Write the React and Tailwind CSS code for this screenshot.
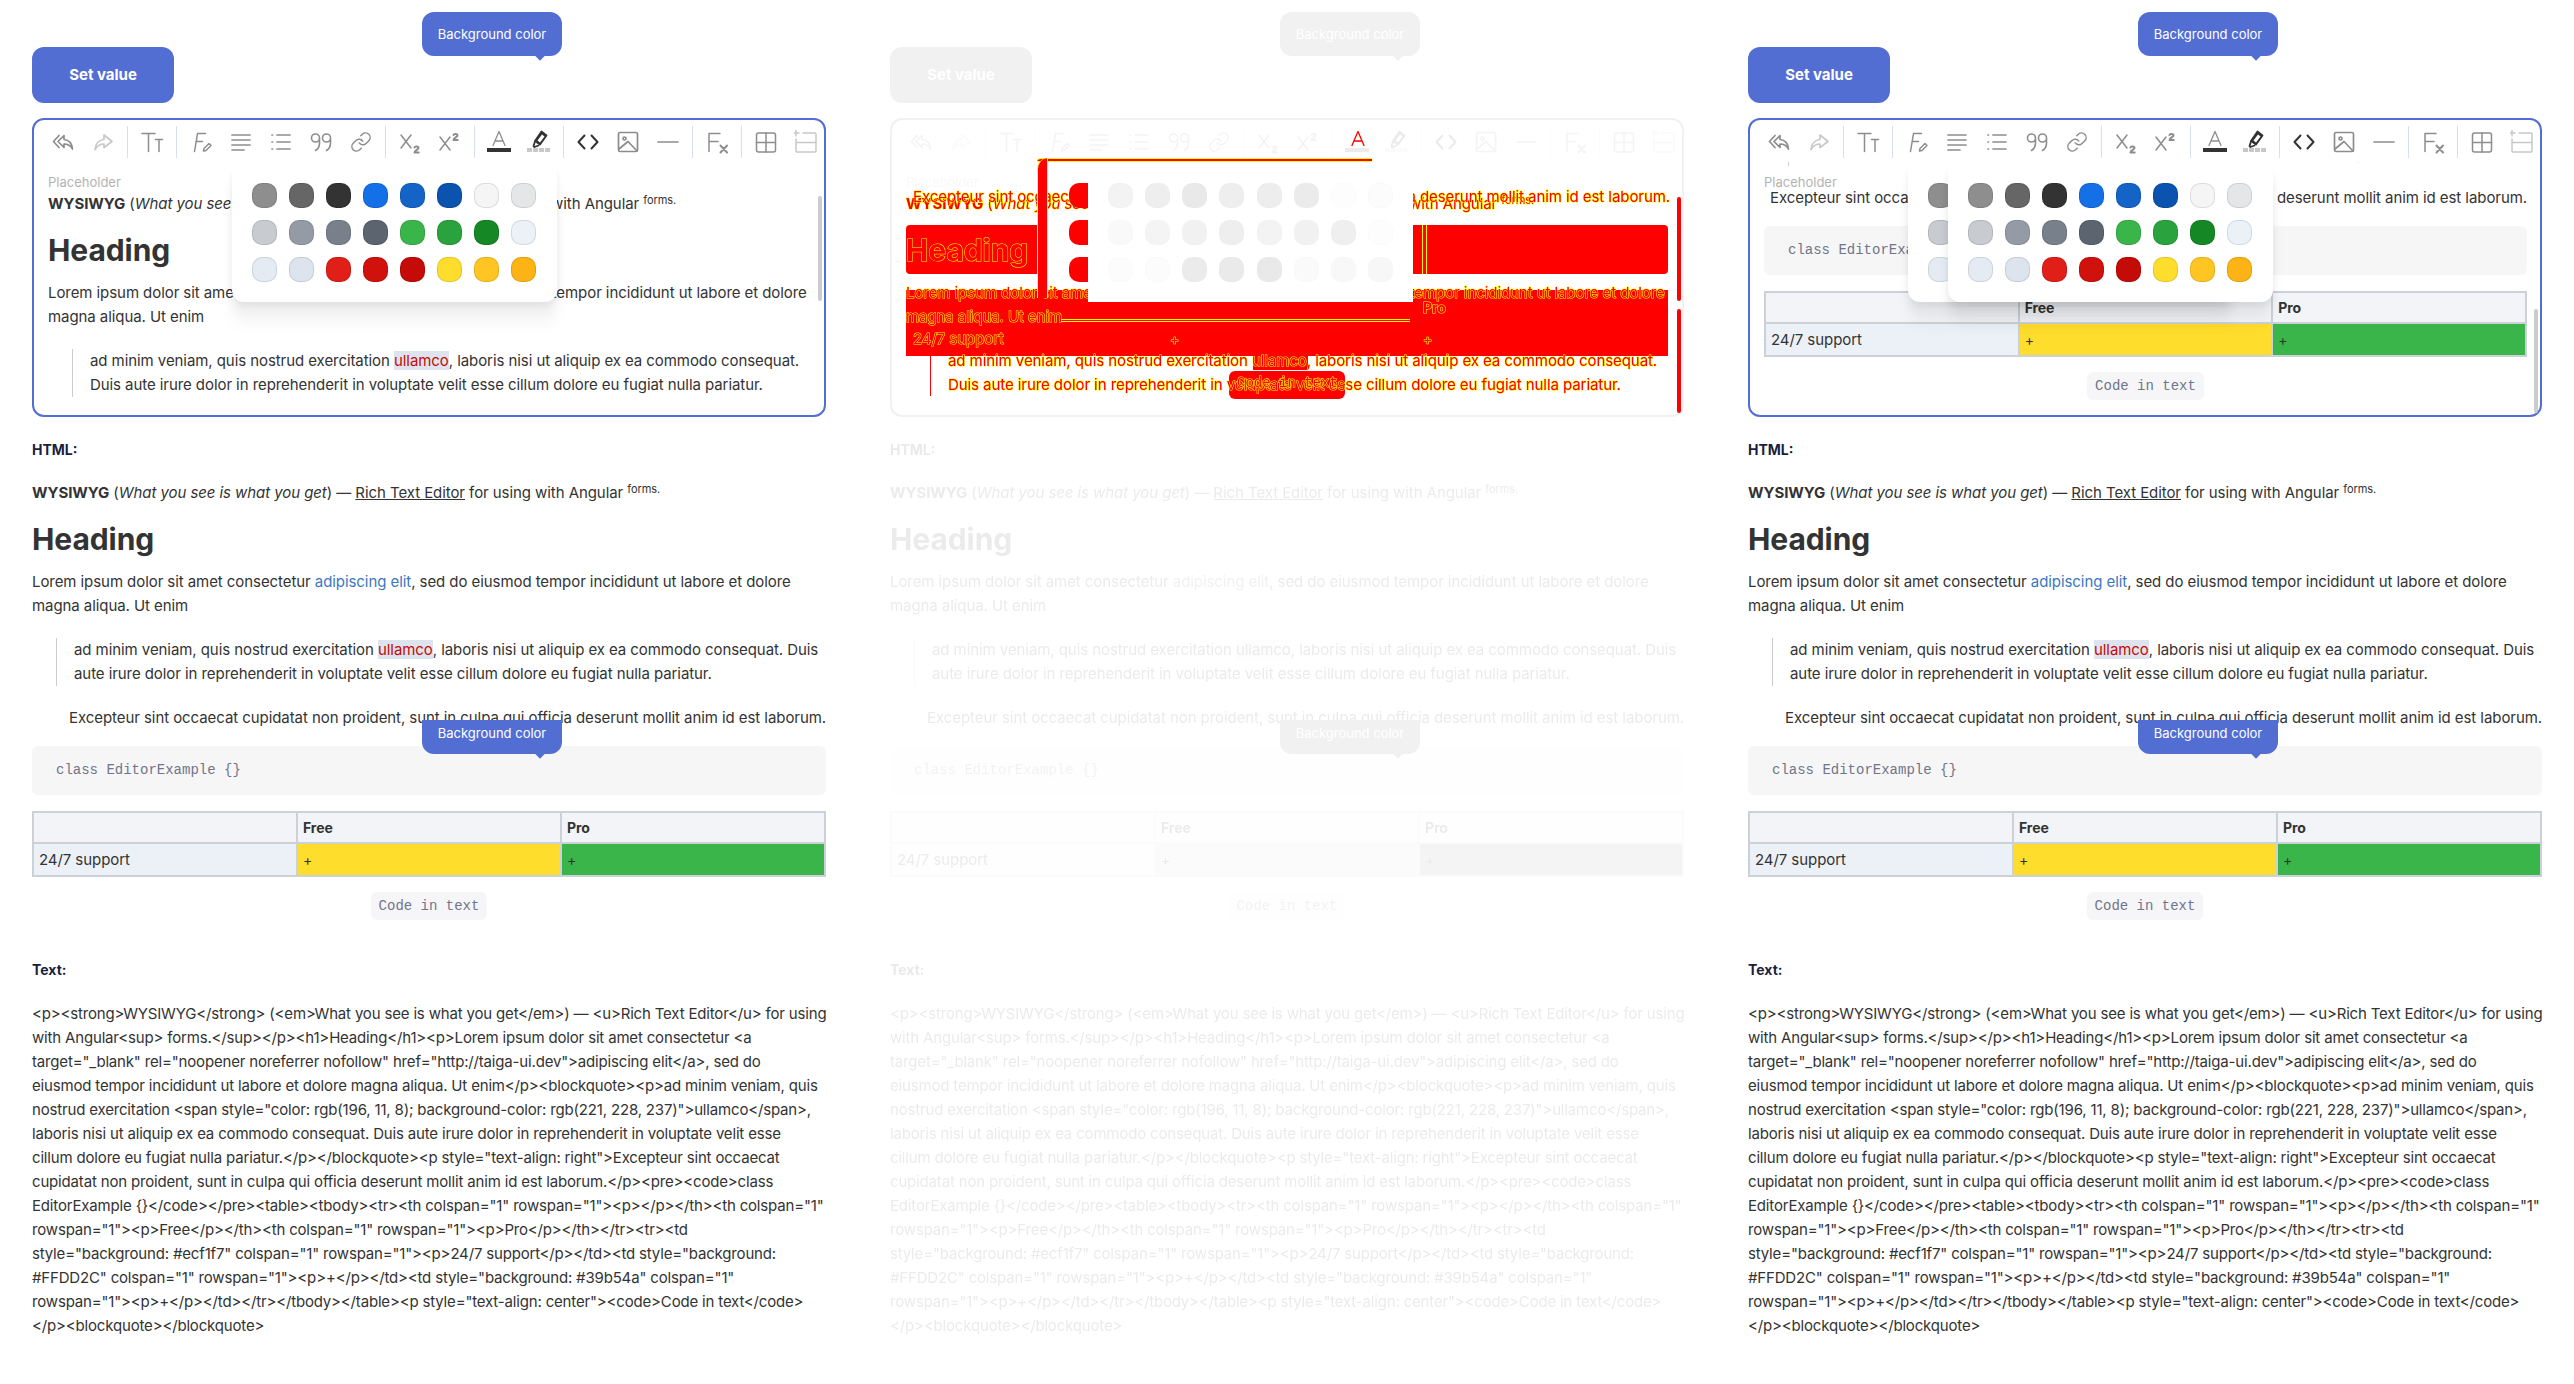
import { Link } from 'lucide-react';

const dotColors = [
  '#8e8e8e', '#666666', '#333333', '#1470e6', '#1464c8', '#0a53ae', '#f5f5f5', '#e4e6e8',
  '#c8ccd1', '#959ba4', '#78808c', '#5c6470', '#39b54a', '#2aa33f', '#158724', '#ecf1f7',
  '#e4ebf3', '#dde4ed', '#e01f19', '#d0110c', '#c40b08', '#ffdd2c', '#ffc522', '#fbb315',
];

const rawLines = [
  '<p><strong>WYSIWYG</strong> (<em>What you see is what you get</em>) — <u>Rich Text Editor</u> for using',
  'with Angular<sup> forms.</sup></p><h1>Heading</h1><p>Lorem ipsum dolor sit amet consectetur <a',
  'target="_blank" rel="noopener noreferrer nofollow" href="http://taiga-ui.dev">adipiscing elit</a>, sed do',
  'eiusmod tempor incididunt ut labore et dolore magna aliqua. Ut enim</p><blockquote><p>ad minim veniam, quis',
  'nostrud exercitation <span style="color: rgb(196, 11, 8); background-color: rgb(221, 228, 237)">ullamco</span>,',
  'laboris nisi ut aliquip ex ea commodo consequat. Duis aute irure dolor in reprehenderit in voluptate velit esse',
  'cillum dolore eu fugiat nulla pariatur.</p></blockquote><p style="text-align: right">Excepteur sint occaecat',
  'cupidatat non proident, sunt in culpa qui officia deserunt mollit anim id est laborum.</p><pre><code>class',
  'EditorExample {}</code></pre><table><tbody><tr><th colspan="1" rowspan="1"><p></p></th><th colspan="1"',
  'rowspan="1"><p>Free</p></th><th colspan="1" rowspan="1"><p>Pro</p></th></tr><tr><td',
  'style="background: #ecf1f7" colspan="1" rowspan="1"><p>24/7 support</p></td><td style="background:',
  '#FFDD2C" colspan="1" rowspan="1"><p>+</p></td><td style="background: #39b54a" colspan="1"',
  'rowspan="1"><p>+</p></td></tr></tbody></table><p style="text-align: center"><code>Code in text</code>',
  '</p><blockquote></blockquote>',
];

const mono = "[font-family:'Liberation_Mono',monospace]";
const diffText = '[-webkit-text-stroke:1px_#ffff00] [paint-order:stroke_fill] text-[#ff0000]';

// Toolbar icons
function Svg({ children, className = 'text-[#8d8d8d]', sw = 1.7 }) {
  return (
    <svg width="24" height="24" viewBox="0 0 24 24" fill="none" stroke="currentColor" strokeWidth={sw} strokeLinecap="round" strokeLinejoin="round" className={className}>
      {children}
    </svg>
  );
}

const UndoIcon = () => (
  <Svg>
    <path d="M8 5.500 2.500 11.500 8 17.500" />
    <path d="M13 5.500 7 11.500l6 6V14c4 0 6.500 1.500 8.500 5-.5-5-3.500-9-8.500-9.500z" />
  </Svg>
);
const RedoIcon = () => (
  <Svg className="text-[#c8c8c8]">
    <path d="M13 5l8 6.500-8 6V14c-4 0-6.500 1.500-9 5.500.5-5.500 4-9.500 9-10z" />
  </Svg>
);
const TextSizeIcon = () => (
  <Svg sw={1.5}>
    <path d="M2 3.500h13M8.500 3.500v18M15.500 9.500h7M19 9.500v12" />
  </Svg>
);
const FontIcon = () => (
  <Svg sw={1.5}>
    <path d="M5.500 21.500 8.500 3.500h8M7.500 11.500h6" />
    <path d="m14.500 21 .5-2.500 5-5 2 2-5 5z" />
  </Svg>
);
const AlignIcon = () => (
  <Svg>
    <path d="M3 5h18M3 10h18M3 15h18M3 20h12" />
  </Svg>
);
const ListIcon = () => (
  <Svg>
    <path d="M8 5h13M8 12h13M8 19h13M3 5h.5M3 12h.5M3 19h.5" />
  </Svg>
);
const QuoteIcon = () => (
  <Svg sw={1.6}>
    <path d="M10.500 8a4 4 0 1 0-8 0 4 4 0 0 0 8 0v5c0 4-1.500 6-4 7.500" />
    <path d="M21.500 8a4 4 0 1 0-8 0 4 4 0 0 0 8 0v5c0 4-1.500 6-4 7.500" />
  </Svg>
);
const SubIcon = () => (
  <Svg sw={1.5}>
    <path d="m3 5 10 13M13 5 3 18" />
    <path strokeWidth="2" d="M16.500 17.500c.5-1.500 4-1.500 4 .5 0 1.500-4 2.500-4 4.500h4.200" />
  </Svg>
);
const SupIcon = () => (
  <Svg sw={1.5}>
    <path d="m2 7 10 13M12 7 2 20" />
    <path strokeWidth="2" d="M15.500 5c.5-1.500 4-1.500 4 .5 0 1.500-4 2.500-4 4.500h4.200" />
  </Svg>
);
const TextColorIcon = ({ lineClass = 'fill-[#333333]', className }) => (
  <Svg sw={1.3} className={className}>
    <path d="M6 15.500 12 1.500l6 14M8 11h8" />
    <rect x="0" y="18" width="24" height="4" stroke="none" className={lineClass} />
  </Svg>
);
const MarkerIcon = () => (
  <Svg className="text-[#333333]" sw={1.8}>
    <path d="m14.500 1.500 5 4-6.500 9-5-3.500z" fill="#333333" />
    <path d="m8 11.500-1.500 4.500 1 1 4-1.500" />
    <path d="M15 4.500l2.500 2-4.500 6-2.500-2z" fill="#ffffff" stroke="none" />
    <path d="M0 20h24" stroke="#c8c8c8" strokeWidth="4" strokeLinecap="butt" strokeDasharray="5 1" />
  </Svg>
);
const CodeIcon = () => (
  <Svg className="text-[#333333]" sw={2}>
    <path d="M8.500 5.500 2.500 12l6 6.500M15.500 5.500l6 6.500-6 6.500" />
  </Svg>
);
const ImageIcon = () => (
  <Svg>
    <rect x="2.500" y="2.500" width="19" height="19" rx="1.500" />
    <circle cx="8.500" cy="8.500" r="1.500" />
    <path d="m21 21-9-9.500-9 7.500" />
  </Svg>
);
const RuleIcon = () => (
  <Svg>
    <path d="M2 12h20" />
  </Svg>
);
const ClearIcon = () => (
  <Svg sw={1.5}>
    <path d="M4 21.500v-18h11M4 11.500h9" />
    <path strokeWidth="2" d="m15.500 15.500 6.500 7M22 15.500l-6.500 7" />
  </Svg>
);
const TableIcon = () => (
  <Svg sw={1.5}>
    <rect x="2.500" y="3" width="19" height="19" rx="2" />
    <path d="M12 3v19M2.500 12.500h19" />
  </Svg>
);
const RowIcon = () => (
  <Svg className="text-[#c8c8c8]" sw={1.5}>
    <path d="M2 0v6M-1 3h6" />
    <path d="M9 3h12a1 1 0 0 1 1 1v17a1 1 0 0 1-1 1H3a1 1 0 0 1-1-1V9M2 12.500h20" />
  </Svg>
);

const toolGroups = [
  [<UndoIcon />, <RedoIcon />],
  [<TextSizeIcon />],
  [<FontIcon />, <AlignIcon />, <ListIcon />, <QuoteIcon />, <Link size={22} strokeWidth={1.6} className="text-[#8d8d8d]" />],
  [<SubIcon />, <SupIcon />],
  [<TextColorIcon />, <MarkerIcon />],
  [<CodeIcon />, <ImageIcon />, <RuleIcon />],
  [<ClearIcon />],
  [<TableIcon />, <RowIcon />],
];

function Toolbar() {
  return (
    <div className="flex items-center h-10 mt-0.5 pl-[9px] shrink-0">
      {toolGroups.map((group, g) => (
        <div key={g} className="flex items-center">
          {g > 0 && <div className="w-px h-8 mx-1 bg-[#d9deeb]" />}
          {group.map((icon, i) => (
            <div key={i} className="w-10 h-10 flex items-center justify-center">
              {icon}
            </div>
          ))}
        </div>
      ))}
    </div>
  );
}

function ColorGrid() {
  return (
    <div className="grid grid-cols-8 gap-3">
      {dotColors.map((color, i) => (
        <div
          key={i}
          className="w-[25px] h-[25px] rounded-[10px] border border-black/10"
          style={{ background: color }}
        />
      ))}
    </div>
  );
}

function Palette({ className }) {
  return (
    <div className={`absolute top-0 w-[325px] h-[140px] px-5 pt-[21px] bg-white rounded-xl shadow-[0_24px_16px_rgba(0,0,0,0.03),0_12px_12px_rgba(0,0,0,0.04),0_4px_6px_rgba(0,0,0,0.05)] ${className}`}>
      <ColorGrid />
    </div>
  );
}

// The part of the document that is above the right aligned paragraph
function Intro({ diff = false }) {
  return (
    <>
      <p>
        <strong className="font-bold">WYSIWYG</strong> (<em>What you see is what you get</em>) — <u>Rich Text Editor</u> for using with Angular{' '}
        <sup className="text-[11px]">forms.</sup>
      </p>
      <h1 className="text-[30px] leading-8 font-bold mt-[18px] mb-[15px]">Heading</h1>
      <p>
        Lorem ipsum dolor sit amet consectetur{' '}
        <a className={diff ? '' : 'text-[#3c78c0]'}>adipiscing elit</a>, sed do eiusmod tempor incididunt ut labore et dolore magna aliqua. Ut enim
      </p>
      <blockquote className={`ml-6 mt-5 pl-[17px] border-l ${diff ? 'border-transparent' : 'border-[#cccccc]'}`}>
        <p>
          ad minim veniam, quis nostrud exercitation{' '}
          <span className={diff ? '' : 'text-[#c40b08] bg-[#dde4ed]'}>ullamco</span>, laboris nisi ut aliquip ex ea commodo consequat. Duis aute irure dolor in reprehenderit in voluptate velit esse cillum dolore eu fugiat nulla pariatur.
        </p>
      </blockquote>
    </>
  );
}

function Document() {
  return (
    <div className="text-[15px] leading-6 text-[#333333] tracking-[-0.07px]">
      <Intro />
      <p className="mt-5 text-right whitespace-nowrap">Excepteur sint occaecat cupidatat non proident, sunt in culpa qui officia deserunt mollit anim id est laborum.</p>
      <pre className={`mt-4 h-[49px] pl-6 bg-[#f6f6f6] rounded-md text-sm leading-[49px] tracking-normal text-[#70758a] ${mono}`}>
        <code>class EditorExample {'{}'}</code>
      </pre>
      <table className="mt-4 w-full table-fixed border-collapse border-2 border-[#ccd1d8] text-[14px]">
        <tbody>
          <tr className="h-[31px] bg-[#f2f4f7] font-bold text-left">
            <th className="border-2 border-[#ccd1d8] px-[5px]" />
            <th className="border-2 border-[#ccd1d8] px-[5px]">Free</th>
            <th className="border-2 border-[#ccd1d8] px-[5px]">Pro</th>
          </tr>
          <tr className="h-[33px]">
            <td className="border-2 border-[#ccd1d8] px-[5px] bg-[#ecf1f7] text-[15px]">24/7 support</td>
            <td className="border-2 border-[#ccd1d8] px-[5px] bg-[#ffdd2c]">+</td>
            <td className="border-2 border-[#ccd1d8] px-[5px] bg-[#39b54a]">+</td>
          </tr>
        </tbody>
      </table>
      <div className="mt-[15px] flex justify-center">
        <code className={`h-7 px-2 bg-[#f6f6f9] rounded-md text-sm leading-7 tracking-normal text-[#70758a] ${mono}`}>Code in text</code>
      </div>
    </div>
  );
}

function Tooltip({ className }) {
  return (
    <div className={`absolute left-[390px] w-[140px] bg-[#526ed3] text-white text-[13px] text-center ${className}`}>
      Background color
      <div className="absolute -bottom-[3px] left-[114px] w-[8px] h-[8px] rotate-45 bg-[#526ed3]" />
    </div>
  );
}

function Editor({ scrolled, empty }) {
  return (
    <div className="relative h-[299px] border-2 border-[#526ed3] rounded-xl flex flex-col">
      <Toolbar />
      <div className="relative flex-1 overflow-hidden pl-3.5 pr-[13px]">
        {!empty && (
          <div className={scrolled ? '-mt-[201px]' : 'mt-[30px]'}>
            <Document />
          </div>
        )}
      </div>
      <div className="absolute left-3.5 top-[52px] h-5 text-[13px] leading-5 text-[#b3b3b3]">Placeholder</div>
      {!empty && (
        <div className={`absolute right-[2px] w-1 rounded-full bg-[#cccccc] ${scrolled ? 'top-[189px] h-[104px]' : 'top-[76px] h-[105px]'}`} />
      )}
      {!empty && (
        <div className="absolute left-0 top-[42px]">
          {scrolled && <Palette className="left-[157.500px]" />}
          <Palette className="left-[197.500px]" />
        </div>
      )}
    </div>
  );
}

function Column({ scrolled, empty }) {
  return (
    <div className="relative pt-[47px] h-[1384px]">
      <Tooltip className="top-3 h-11 leading-[44px] rounded-xl" />
      <button className="block w-[142px] h-14 rounded-xl bg-[#526ed3] text-white text-[15px] font-bold">Set value</button>
      <div className="mt-[15px]">
        <Editor scrolled={scrolled} empty={empty} />
      </div>
      <div className="mt-[21px] h-6 text-sm leading-6 font-bold text-[#1b1f3b]">HTML:</div>
      <div className="mt-[19px]">
        <Document />
      </div>
      <div className="mt-[38px] h-6 text-sm leading-6 font-bold text-[#1b1f3b]">Text:</div>
      <div className="mt-5 text-[15px] leading-6 text-[#333333] tracking-[-0.17px]">
        {rawLines.map((line, i) => (
          <div key={i} className="whitespace-nowrap">{line}</div>
        ))}
      </div>
      <Tooltip className="top-[720px] h-[34px] leading-[26px] rounded-b-xl" />
    </div>
  );
}

// Second column: a pixel diff of the other two, drawn over a ghost of the page
function DiffOverlay() {
  return (
    <div className="absolute inset-0 text-[15px] leading-6 tracking-[-0.07px]">
      <div className="absolute left-[468px] top-[130px] -translate-x-3">
        <TextColorIcon className="text-[#ff0000]" lineClass="fill-transparent" />
      </div>
      {/* blocks that changed */}
      <div className="absolute left-4 top-[225px] w-[131px] h-[49px] bg-[#ff0000] rounded-l" />
      <div className="absolute left-[523px] top-[225px] w-[255px] h-[49px] bg-[#ff0000] rounded-r" />
      <div className="absolute left-[532px] top-[225px] w-px h-[49px] bg-[#ffff00]" />
      <div className="absolute left-[536px] top-[225px] w-px h-[49px] bg-[#ffff00]" />
      <div className="absolute left-4 top-[290px] w-[762px] h-[66px] bg-[#ff0000]" />
      <div className="absolute left-[170px] top-[319px] w-[350px] h-[3px] border-y border-[#ffff00]" />
      <div className="absolute left-[339px] top-[371px] w-[116px] h-7 bg-[#ff0000] rounded-md" />
      <div className="absolute left-[363px] top-[356px] w-[55px] h-[14px] bg-[#ff0000]" />
      <div className="absolute left-10 top-[356px] w-px h-10 bg-[#ff0000]" />
      <div className="absolute left-[787px] top-[197px] w-1 h-[104px] bg-[#ff0000] rounded-full" />
      <div className="absolute left-[787px] top-[309px] w-1 h-[104px] bg-[#ff0000] rounded-full" />
      {/* text of both editors */}
      <div className={`absolute left-4 top-[192px] w-[764px] ${diffText}`}>
        <Intro diff />
      </div>
      <div className={`absolute left-4 top-[185px] w-[764px] text-right whitespace-nowrap ${diffText}`}>
        Excepteur sint occaecat cupidatat non proident, sunt in culpa qui officia deserunt mollit anim id est laborum.
      </div>
      <div className={`absolute left-[23px] top-[327px] ${diffText}`}>24/7 support</div>
      <div className={`absolute left-[280px] top-[327px] text-[14px] ${diffText}`}>+</div>
      <div className={`absolute left-[533px] top-[327px] text-[14px] ${diffText}`}>+</div>
      <div className={`absolute left-[533px] top-[296px] text-[14px] font-bold ${diffText}`}>Pro</div>
      <div className={`absolute left-[347px] top-[373px] text-sm tracking-normal ${mono} ${diffText}`}>Code in text</div>
      {/* outline of the palette that moved */}
      <div className="absolute left-[147px] top-[158px] w-[335px] h-1 bg-[#ff0000] border-y border-[#ffff00] rounded-tl-xl" />
      <div className="absolute left-[147px] top-[158px] w-[11px] h-[140px] bg-[#ff0000] border-x border-[#ffff00] rounded-tl-xl" />
      <div className="absolute left-[179px] top-[183px] w-5 h-[25px] bg-[#ff0000] rounded-l-[10px]" />
      <div className="absolute left-[179px] top-[220px] w-5 h-[25px] bg-[#ff0000] rounded-l-[10px]" />
      <div className="absolute left-[179px] top-[257px] w-5 h-[25px] bg-[#ff0000] rounded-l-[10px]" />
      <div className="absolute left-[198px] top-[162px] w-[325px] h-[140px] px-5 pt-[21px] bg-white">
        <div className="grayscale opacity-10">
          <ColorGrid />
        </div>
      </div>
    </div>
  );
}

export default function App() {
  return (
    <div className="h-[1384px] overflow-hidden bg-white px-8 grid grid-cols-3 gap-16 [font-family:Inter,sans-serif]">
      <Column />
      <div className="relative">
        <div className="grayscale opacity-10">
          <Column empty />
        </div>
        <DiffOverlay />
      </div>
      <Column scrolled />
    </div>
  );
}
